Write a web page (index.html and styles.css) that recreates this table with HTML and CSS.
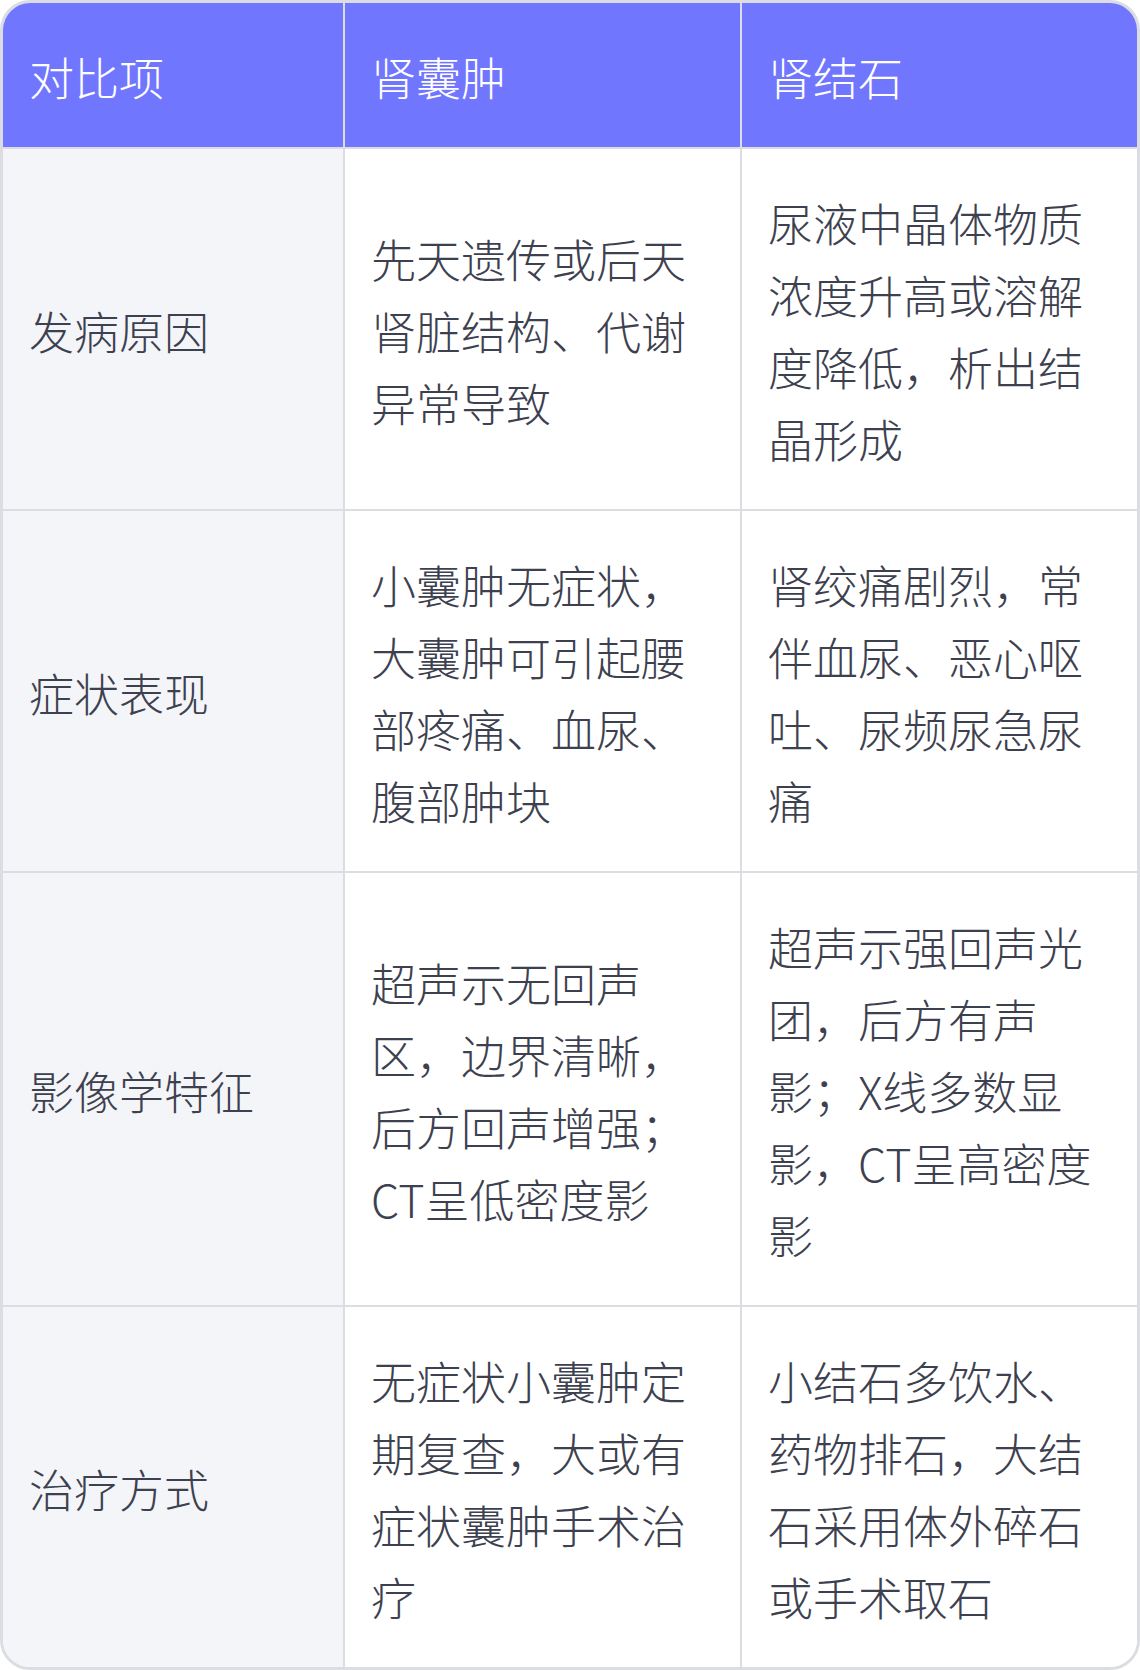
FILE: index.html
```html
<!DOCTYPE html>
<html lang="zh-CN">
<head>
<meta charset="utf-8">
<link rel="stylesheet" href="styles.css">
</head>
<body>
<div class="table">
  <div class="cell head">对比项</div>
  <div class="cell head">肾囊肿</div>
  <div class="cell head last">肾结石</div>

  <div class="cell label">发病原因</div>
  <div class="cell">先天遗传或后天肾脏结构、代谢异常导致</div>
  <div class="cell last">尿液中晶体物质浓度升高或溶解度降低，析出结晶形成</div>

  <div class="cell label">症状表现</div>
  <div class="cell">小囊肿无症状，大囊肿可引起腰部疼痛、血尿、腹部肿块</div>
  <div class="cell last">肾绞痛剧烈，常伴血尿、恶心呕吐、尿频尿急尿痛</div>

  <div class="cell label">影像学特征</div>
  <div class="cell">超声示无回声区，边界清晰，后方回声增强；CT呈低密度影</div>
  <div class="cell last">超声示强回声光团，后方有声影；X线多数显影，CT呈高密度影</div>

  <div class="cell label bottom">治疗方式</div>
  <div class="cell bottom">无症状小囊肿定期复查，大或有症状囊肿手术治疗</div>
  <div class="cell last bottom">小结石多饮水、药物排石，大结石采用体外碎石或手术取石</div>
</div>
</body>
</html>
```

FILE: styles.css
```css
html, body {
  margin: 0;
  padding: 0;
  background: #ffffff;
}
.table {
  box-sizing: border-box;
  width: 1140px;
  display: grid;
  grid-template-columns: 342px 397px 395px;
  border: 3px solid #dcdde2;
  border-radius: 30px;
  overflow: hidden;
  font-family: "Noto Sans CJK SC", "Noto Sans", sans-serif;
  font-weight: 300;
  font-size: 45px;
  line-height: 72px;
  color: #3d414f;
}
.cell {
  box-sizing: border-box;
  display: flex;
  align-items: center;
  padding: 38px 28px 34px 26px;
  border-right: 2px solid #dcdde2;
  border-bottom: 2px solid #dcdde2;
  background: #ffffff;
}
.cell.last {
  border-right: none;
}
.cell.bottom {
  border-bottom: none;
}
.cell.head {
  background: #7176ff;
  color: #ffffff;
}
.cell.label {
  background: #f4f5f9;
}
```
